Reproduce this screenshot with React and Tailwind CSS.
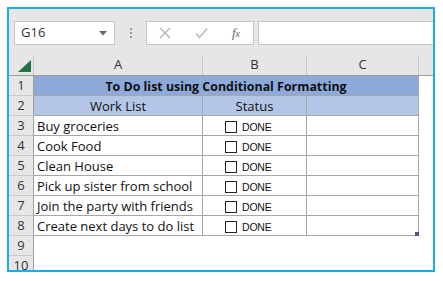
import React from "react";

const rows = [
  "Buy groceries",
  "Cook Food",
  "Clean House",
  "Pick up sister from school",
  "Join the party with friends",
  "Create next days to do list",
];

function RowHead({ n, last }) {
  return (
    <div className={`w-[25px] shrink-0 h-full flex items-center justify-center bg-[#e6e6e6] border-r border-[#9e9e9e] ${last ? "" : "border-b border-b-[#c8c8c8]"} text-[13px] text-[#333]`}>
      {n}
    </div>
  );
}

function Check() {
  return (
    <div className="flex items-end h-full pb-[2px] pl-[22px] gap-[5px]">
      <div className="w-[12px] h-[12px] border border-[#222] bg-white" />
      <span className="text-[10.5px] leading-[12px] text-[#111] font-['Liberation_Sans',sans-serif] tracking-[-0.2px]">DONE</span>
    </div>
  );
}

export default function App() {
  return (
    <div className="w-[443px] h-[281px] bg-white pt-[7px] pl-[7px] font-['Open_Sans',sans-serif]">
      <div className="w-[428px] h-[265px] border-2 border-[#1aaee8] bg-white overflow-hidden flex flex-col">
        {/* toolbar */}
        <div className="h-[46px] bg-[#e6e6e6] flex items-start pt-[12px] pl-[5px] shrink-0">
          <div className="w-[101px] h-[24px] bg-white border border-[#c6c6c6] flex items-center pl-[6px] pr-[7px] justify-between">
            <span className="text-[13px] text-[#333]">G16</span>
            <svg width="8" height="5" viewBox="0 0 8 5"><path d="M0 0H8L4 4.5Z" fill="#666" /></svg>
          </div>
          <div className="w-[31px] h-[24px] flex flex-col items-center justify-center gap-[2px]">
            <div className="w-[2px] h-[2px] bg-[#9a9a9a]" />
            <div className="w-[2px] h-[2px] bg-[#9a9a9a]" />
            <div className="w-[2px] h-[2px] bg-[#9a9a9a]" />
          </div>
          <div className="w-[108px] h-[24px] bg-white border border-[#c6c6c6] flex items-center">
            <div className="w-[36px] flex justify-center">
              <svg width="12" height="12" viewBox="0 0 12 12"><path d="M1 1L11 11M11 1L1 11" stroke="#b4b4b4" strokeWidth="1.3" /></svg>
            </div>
            <div className="w-[36px] flex justify-center">
              <svg width="13" height="12" viewBox="0 0 13 12"><path d="M1 6.5L4.5 10.5L12 1.5" stroke="#b4b4b4" strokeWidth="1.4" fill="none" /></svg>
            </div>
            <div className="w-[34px] flex justify-center">
              <span className="text-[13px] italic text-[#666] font-['Liberation_Serif',serif]">f<span className="text-[10px]">x</span></span>
            </div>
          </div>
          <div className="ml-[4px] flex-1 h-[24px] bg-white border border-[#c6c6c6] border-r-0" />
        </div>
        {/* column headers */}
        <div className="h-[21px] flex bg-[#e6e6e6] border-b border-[#9e9e9e] shrink-0 text-[13px] text-[#333]">
          <div className="w-[25px] shrink-0 border-r border-[#c8c8c8] relative">
            <svg className="absolute right-[2px] bottom-[3px]" width="13" height="12" viewBox="0 0 13 12"><path d="M13 0V12H0Z" fill="#217346" /></svg>
          </div>
          <div className="w-[169px] shrink-0 border-r border-[#c8c8c8] flex items-center justify-center">A</div>
          <div className="w-[104px] shrink-0 border-r border-[#c8c8c8] flex items-center justify-center">B</div>
          <div className="w-[112px] shrink-0 border-r border-[#c8c8c8] flex items-center justify-center">C</div>
          <div className="flex-1" />
        </div>
        {/* row 1 */}
        <div className="h-[20px] flex shrink-0">
          <RowHead n={1} />
          <div className="w-[385px] shrink-0 bg-[#8eaadb] border-b border-r border-[#a6a6a6] flex items-end pb-[2px] leading-[13px] justify-center text-[12.4px] font-bold text-[#111]">
            To Do list using Conditional Formatting
          </div>
        </div>
        {/* row 2 */}
        <div className="h-[20px] flex shrink-0 text-[13px] leading-[13px] text-[#111]">
          <RowHead n={2} />
          <div className="w-[169px] shrink-0 bg-[#b4c6e7] border-b border-r border-[#a6a6a6] flex items-end pb-[2px] justify-center">Work List</div>
          <div className="w-[104px] shrink-0 bg-[#b4c6e7] border-b border-r border-[#a6a6a6] flex items-end pb-[2px] justify-center">Status</div>
          <div className="w-[112px] shrink-0 bg-[#b4c6e7] border-b border-r border-[#a6a6a6]" />
        </div>
        {rows.map((t, i) => (
          <div key={t} className="h-[20px] flex shrink-0 text-[13px] leading-[13px] text-[#111]">
            <RowHead n={i + 3} />
            <div className="w-[169px] shrink-0 border-b border-r border-[#a6a6a6] flex items-end pb-[2px] pl-[3px] whitespace-nowrap">{t}</div>
            <div className="w-[104px] shrink-0 border-b border-r border-[#a6a6a6] relative">
              <Check />
            </div>
            <div className="w-[112px] shrink-0 border-b border-r border-[#a6a6a6] relative">
              {i === rows.length - 1 && (
                <div className="absolute right-[-1px] bottom-[-1px] w-[4px] h-[4px] bg-[#4a5590]" />
              )}
            </div>
          </div>
        ))}
        <div className="h-[20px] flex shrink-0">
          <RowHead n={9} />
        </div>
        <div className="h-[20px] flex shrink-0">
          <RowHead n={10} last />
        </div>
      </div>
    </div>
  );
}
